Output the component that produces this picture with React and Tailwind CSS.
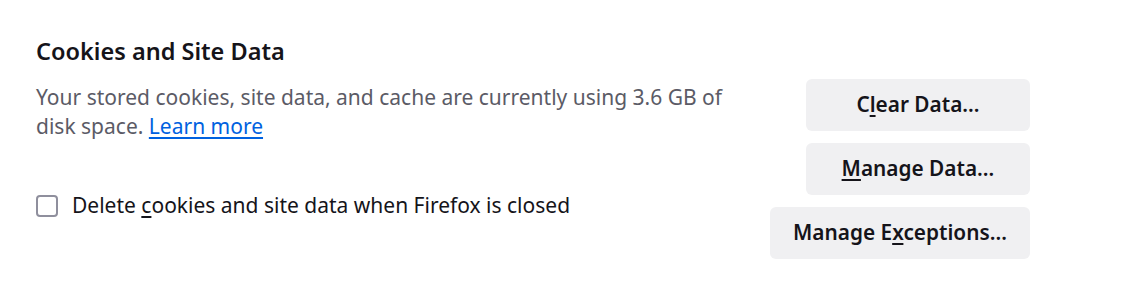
export default function App() {
  const font = { fontFamily: '"Noto Sans", "Open Sans", sans-serif' };
  return (
    <div className="w-[1133px] h-[298px] bg-white flex" style={font}>
      <div className="flex-1 pl-[36px] pt-[36px]">
        <h2 className="text-[23.5px] leading-[30px] font-semibold text-[#15141a]">Cookies and Site Data</h2>
        <p className="mt-[17px] w-[712px] text-[21px] leading-[29px] text-[#5b5b66]">
          Your stored cookies, site data, and cache are currently using 3.6 GB of disk space.{" "}
          <a href="#" className="text-[#0061e0] underline underline-offset-[3px]">Learn more</a>
        </p>
        <label className="mt-[50px] flex items-center gap-[14px] text-[21px] leading-[29px] text-[#15141a]">
          <span className="w-[22px] h-[22px] shrink-0 rounded-[4px] border-2 border-[#8f8f9d] bg-white" />
          <span>Delete <span className="underline underline-offset-[3px]">c</span>ookies and site data when Firefox is closed</span>
        </label>
      </div>
      <div className="pr-[103px] pt-[79px] flex flex-col items-end gap-[12px]">
        <button className="w-[224px] h-[52px] rounded-[6px] bg-[#f0f0f2] text-[20.8px] font-semibold text-[#15141a]">
          C<span className="underline underline-offset-[3px]">l</span>ear Data…
        </button>
        <button className="w-[224px] h-[52px] rounded-[6px] bg-[#f0f0f2] text-[20.8px] font-semibold text-[#15141a]">
          <span className="underline underline-offset-[3px]">M</span>anage Data…
        </button>
        <button className="px-[23px] h-[52px] rounded-[6px] bg-[#f0f0f2] text-[20.8px] font-semibold text-[#15141a]">
          Manage E<span className="underline underline-offset-[3px]">x</span>ceptions…
        </button>
      </div>
    </div>
  );
}
